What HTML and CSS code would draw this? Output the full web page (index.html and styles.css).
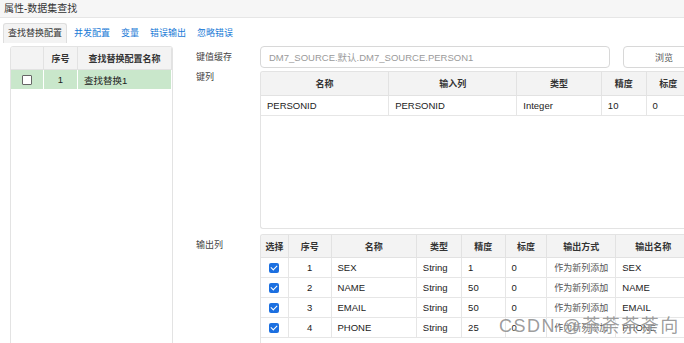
FILE: index.html
```html
<!DOCTYPE html>
<html lang="zh">
<head>
    <meta charset="UTF-8">
    <title>属性-数据集查找</title>
    <link rel="stylesheet" href="styles.css">
</head>
<body>

    <!-- Title -->
    <div class="titlebar">属性-数据集查找</div>

    <!-- Tabs -->
    <div class="tabs">
        <span class="tab active">查找替换配置</span>
        <span class="tab">并发配置</span>
        <span class="tab">变量</span>
        <span class="tab">错误输出</span>
        <span class="tab">忽略错误</span>
    </div>

    <div class="main">
        <!-- Config list -->
        <div class="side">
            <table class="grid side-grid">
                <tr>
                    <th class="c-check"></th>
                    <th class="c-no">序号</th>
                    <th>查找替换配置名称</th>
                </tr>
                <tr class="selected">
                    <td class="center"><span class="box"></span></td>
                    <td class="center">1</td>
                    <td>查找替换1</td>
                </tr>
            </table>
        </div>

        <!-- Form -->
        <div class="form">
            <div class="row row-cache">
                <label class="label">键值缓存</label>
                <div class="field">
                    <input type="text" class="input" placeholder="DM7_SOURCE.默认.DM7_SOURCE.PERSON1">
                    <button class="btn">浏览</button>
                </div>
            </div>

            <div class="row row-keys">
                <label class="label label-top">键列</label>
                <div class="panel key-panel">
                    <table class="grid key-grid">
                        <tr>
                            <th style="width: 134px">名称</th>
                            <th style="width: 134px">输入列</th>
                            <th style="width: 88px">类型</th>
                            <th style="width: 46px">精度</th>
                            <th style="width: 46px">标度</th>
                        </tr>
                        <tr>
                            <td>PERSONID</td>
                            <td>PERSONID</td>
                            <td>Integer</td>
                            <td>10</td>
                            <td>0</td>
                        </tr>
                    </table>
                </div>
            </div>

            <div class="row row-out">
                <label class="label label-top2">输出列</label>
                <div class="panel out-panel">
                    <table class="grid out-grid">
                        <tr>
                            <th style="width: 28px">选择</th>
                            <th style="width: 47px">序号</th>
                            <th style="width: 93px">名称</th>
                            <th style="width: 46px">类型</th>
                            <th style="width: 47px">精度</th>
                            <th style="width: 46px">标度</th>
                            <th style="width: 71px">输出方式</th>
                            <th style="width: 80px">输出名称</th>
                        </tr>
                        <tr>
                            <td class="center"><span class="tick"></span></td>
                            <td class="center">1</td>
                            <td>SEX</td>
                            <td>String</td>
                            <td>1</td>
                            <td>0</td>
                            <td class="mode">作为新列添加</td>
                            <td>SEX</td>
                        </tr>
                        <tr>
                            <td class="center"><span class="tick"></span></td>
                            <td class="center">2</td>
                            <td>NAME</td>
                            <td>String</td>
                            <td>50</td>
                            <td>0</td>
                            <td class="mode">作为新列添加</td>
                            <td>NAME</td>
                        </tr>
                        <tr>
                            <td class="center"><span class="tick"></span></td>
                            <td class="center">3</td>
                            <td>EMAIL</td>
                            <td>String</td>
                            <td>50</td>
                            <td>0</td>
                            <td class="mode">作为新列添加</td>
                            <td>EMAIL</td>
                        </tr>
                        <tr>
                            <td class="center"><span class="tick"></span></td>
                            <td class="center">4</td>
                            <td>PHONE</td>
                            <td>String</td>
                            <td>25</td>
                            <td>0</td>
                            <td class="mode">作为新列添加</td>
                            <td>PHONE</td>
                        </tr>
                    </table>
                </div>
            </div>
        </div>
    </div>

    <div class="watermark">CSDN @荼荼荼荼向</div>

</body>
</html>
```

FILE: styles.css
```css
html, body {
    margin: 0;
    height: 100%;
    overflow: hidden;
}
body {
    font-family: "Liberation Sans", "Noto Sans CJK SC", sans-serif;
    font-size: 9px;
    color: #222;
    background-color: #fff;
    position: relative;
}
.titlebar {
    height: 17px;
    line-height: 17px;
    padding-left: 4px;
    font-size: 10px;
    color: #333;
    background-color: #f6f6f6;
    border-bottom: 1px solid #e6e6e6;
}
.tabs {
    display: flex;
    align-items: flex-end;
    gap: 3px;
    height: 20px;
    padding: 5px 0 0 3px;
}
.tab {
    padding: 0 4px;
    height: 19px;
    line-height: 18px;
    color: #1a7ad6;
}
.tab.active {
    color: #333;
    background-color: #f3f3f3;
    border: 1px solid #dedede;
    border-bottom: none;
    border-radius: 3px 3px 0 0;
}
.main {
    display: flex;
    padding-top: 3px;
}
.side {
    flex-shrink: 0;
    margin-left: 10px;
    width: 161px;
    height: 400px;
    border: 1px solid #e3e3e3;
    border-radius: 3px;
    overflow: hidden;
}
.grid {
    border-collapse: collapse;
    table-layout: fixed;
}
.grid th {
    height: 22px;
    padding: 0;
    font-weight: bold;
    color: #333;
    background-color: #f3f3f3;
    border: 1px solid #e2e2e2;
    text-align: center;
    white-space: nowrap;
}
.grid td {
    height: 19px;
    padding: 0 6px;
    font-size: 9.5px;
    border: 1px solid #e6e6e6;
    white-space: nowrap;
    overflow: hidden;
}
.grid tr > *:first-child {
    border-left: none;
}
.grid tr:first-child > * {
    border-top: none;
}
.center {
    text-align: center;
}
.side-grid {
    width: 161px;
}
.side-grid .c-check {
    width: 32px;
}
.side-grid .c-no {
    width: 33px;
}
.side-grid td {
    height: 19px;
    border-color: transparent;
}
.side-grid .selected td {
    background-color: #c9e7cb;
}
.box {
    display: inline-block;
    width: 8px;
    height: 8px;
    border: 1px solid #666;
    border-radius: 1px;
    background-color: #fff;
    vertical-align: middle;
}
.form {
    margin-left: 23px;
    flex: 1;
    min-width: 0;
}
.row {
    display: flex;
}
.label {
    width: 64px;
    flex-shrink: 0;
    color: #444;
    line-height: 22px;
}
.label-top {
    line-height: 12px;
}
.label-top2 {
    padding-top: 5px;
    line-height: 12px;
}
.field {
    display: flex;
    gap: 13px;
}
.input {
    box-sizing: border-box;
    flex-shrink: 0;
    width: 350px;
    height: 22px;
    margin: 0;
    padding: 0 8px;
    border: 1px solid #d8d8d8;
    border-radius: 4px;
    font-family: inherit;
    font-size: 9.5px;
}
.input::placeholder {
    color: #9a9a9a;
}
.btn {
    box-sizing: border-box;
    flex-shrink: 0;
    width: 82px;
    height: 22px;
    margin: 0;
    padding: 0;
    border: 1px solid #d8d8d8;
    border-radius: 4px;
    background-color: #fff;
    font-family: inherit;
    font-size: 9px;
    color: #555;
}
.row-keys {
    margin-top: 3px;
}
.panel {
    flex-shrink: 0;
    border: 1px solid #e3e3e3;
    border-right: none;
    border-radius: 3px 0 0 3px;
    width: 430px;
    overflow: hidden;
}
.key-panel {
    height: 156px;
}
.key-grid th {
    height: 23px;
}
.row-out {
    margin-top: 5px;
}
.out-panel {
    height: 120px;
}
.out-grid th {
    height: 22px;
}
.out-grid td {
    height: 19px;
}
.out-grid td.mode {
    text-align: center;
    color: #555;
    padding: 0;
    font-size: 9px;
}
.tick {
    display: inline-block;
    width: 10px;
    height: 10px;
    border-radius: 2px;
    background-color: #1b6fe0;
    vertical-align: middle;
    position: relative;
}
.tick::after {
    content: "";
    position: absolute;
    left: 3px;
    top: 1px;
    width: 3px;
    height: 5px;
    border: solid #fff;
    border-width: 0 1.5px 1.5px 0;
    transform: rotate(45deg);
}
.watermark {
    position: absolute;
    left: 499px;
    top: 311px;
    font-size: 18px;
    color: rgba(100, 100, 100, 0.65);
    text-shadow: 0 0 2px #fff;
    white-space: nowrap;
    letter-spacing: 1.5px;
}
```
